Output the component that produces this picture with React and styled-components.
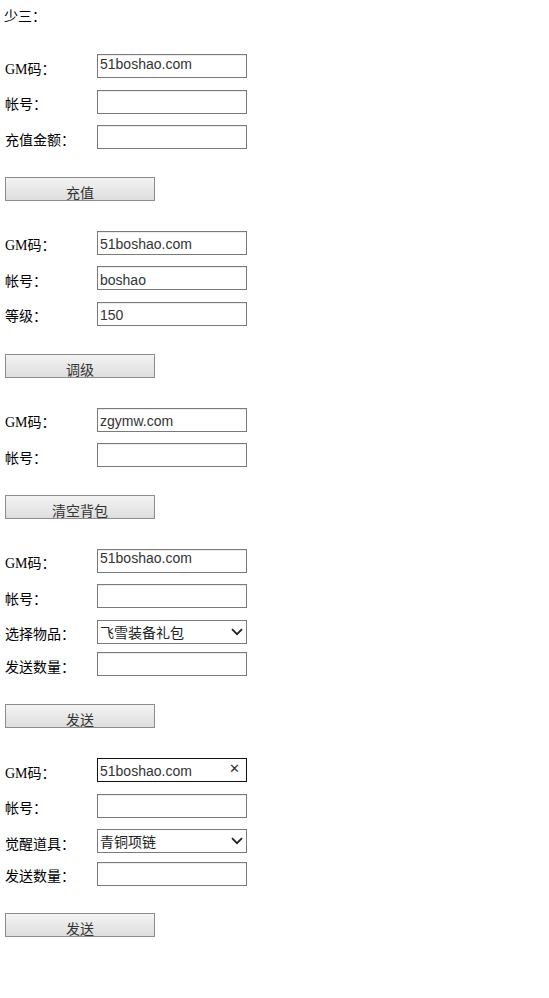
import React from "react";
import styled, { createGlobalStyle } from "styled-components";

const Global = createGlobalStyle`
  html, body { margin: 0; padding: 0; background: #fff; }
  body { font-family: "Liberation Serif", "Noto Sans CJK SC", serif; font-size: 14px; color: #000; }
`;

const Page = styled.div`
  display: flex;
  flex-direction: column;
  padding: 7px 0 40px 5px;
  width: 300px;
`;

const Title = styled.div`
  height: 20px;
  line-height: 20px;
  margin-left: -1px;
  margin-bottom: 27px;
`;

const Block = styled.form`
  display: flex;
  flex-direction: column;
  margin-bottom: 30px;
`;

const Row = styled.div`
  display: flex;
  align-items: center;
  height: 24px;
  margin-top: ${(p) => (p.$first ? "0" : p.$tight ? "8.5px" : "11.5px")};
`;

const Label = styled.label`
  width: 92px;
  flex: none;
  padding-top: 7px;
  line-height: 16px;
  white-space: nowrap;
`;

const Field = styled.input`
  box-sizing: border-box;
  width: 150px;
  height: 24px;
  margin: 0;
  padding: ${(p) => (p.$lift ? "0 2px 5px" : "3px 2px 0")};
  border: 1px solid #7a7a7a;
  box-shadow: inset 0 1px 0 #ececec;
  background: #fff;
  font-family: "Liberation Sans", Arial, sans-serif;
  font-size: 14px;
  color: #333;
  outline: none;
`;

const ClearWrap = styled.div`
  position: relative;
  width: 150px;
  height: 24px;
`;

const FocusField = styled(Field)`
  border: 1px solid #111;
  box-shadow: none;
  padding: 2px 20px 0 2px;
`;

const ClearBtn = styled.span`
  position: absolute;
  right: 7px;
  top: 3px;
  font-family: "DejaVu Sans", sans-serif;
  font-size: 13px;
  line-height: 16px;
  color: #333;
`;

const SelectBox = styled.div`
  position: relative;
  width: 150px;
  height: 24px;
`;

const Select = styled.select`
  box-sizing: border-box;
  appearance: none;
  width: 150px;
  height: 24px;
  margin: 0;
  padding: 0 20px 0 2px;
  border: 1px solid #7a7a7a;
  background: #fff;
  font-family: "Noto Sans CJK SC", "Liberation Sans", sans-serif;
  font-size: 14px;
  color: #222;
  outline: none;
`;

const Chevron = styled.svg`
  position: absolute;
  right: 4px;
  top: 8px;
  pointer-events: none;
`;

const Button = styled.button`
  box-sizing: border-box;
  width: 150px;
  height: 24px;
  margin-top: 27.75px;
  padding: 6px 0 0;
  border: 1px solid #8c8c8c;
  background: linear-gradient(#f3f3f3, #dedede);
  font-family: "Noto Sans CJK SC", sans-serif;
  font-size: 14px;
  line-height: 16px;
  color: #333;
  text-align: center;
`;

function Input({ value, lift }) {
  return <Field type="text" defaultValue={value} $lift={lift} />;
}

function Drop({ value }) {
  return (
    <SelectBox>
      <Select defaultValue={value}>
        <option>{value}</option>
      </Select>
      <Chevron width="12" height="8" viewBox="0 0 12 8">
        <path d="M1 1.2 L6 6.2 L11 1.2" fill="none" stroke="#222" strokeWidth="1.8" />
      </Chevron>
    </SelectBox>
  );
}

export default function App() {
  return (
    <>
      <Global />
      <Page>
        <Title>少三：</Title>

        <Block>
          <Row $first>
            <Label>GM码：</Label>
            <Input value="51boshao.com" lift />
          </Row>
          <Row>
            <Label>帐号：</Label>
            <Input />
          </Row>
          <Row>
            <Label>充值金额：</Label>
            <Input />
          </Row>
          <Button type="button">充值</Button>
        </Block>

        <Block>
          <Row $first>
            <Label>GM码：</Label>
            <Input value="51boshao.com" />
          </Row>
          <Row>
            <Label>帐号：</Label>
            <Input value="boshao" />
          </Row>
          <Row>
            <Label>等级：</Label>
            <Input value="150" />
          </Row>
          <Button type="button">调级</Button>
        </Block>

        <Block>
          <Row $first>
            <Label>GM码：</Label>
            <Input value="zgymw.com" />
          </Row>
          <Row>
            <Label>帐号：</Label>
            <Input />
          </Row>
          <Button type="button">清空背包</Button>
        </Block>

        <Block>
          <Row $first>
            <Label>GM码：</Label>
            <Input value="51boshao.com" lift />
          </Row>
          <Row>
            <Label>帐号：</Label>
            <Input />
          </Row>
          <Row>
            <Label>选择物品：</Label>
            <Drop value="飞雪装备礼包" />
          </Row>
          <Row $tight>
            <Label>发送数量：</Label>
            <Input />
          </Row>
          <Button type="button">发送</Button>
        </Block>

        <Block>
          <Row $first>
            <Label>GM码：</Label>
            <ClearWrap>
              <FocusField type="text" defaultValue="51boshao.com" />
              <ClearBtn>✕</ClearBtn>
            </ClearWrap>
          </Row>
          <Row>
            <Label>帐号：</Label>
            <Input />
          </Row>
          <Row>
            <Label>觉醒道具：</Label>
            <Drop value="青铜项链" />
          </Row>
          <Row $tight>
            <Label>发送数量：</Label>
            <Input />
          </Row>
          <Button type="button">发送</Button>
        </Block>
      </Page>
    </>
  );
}
